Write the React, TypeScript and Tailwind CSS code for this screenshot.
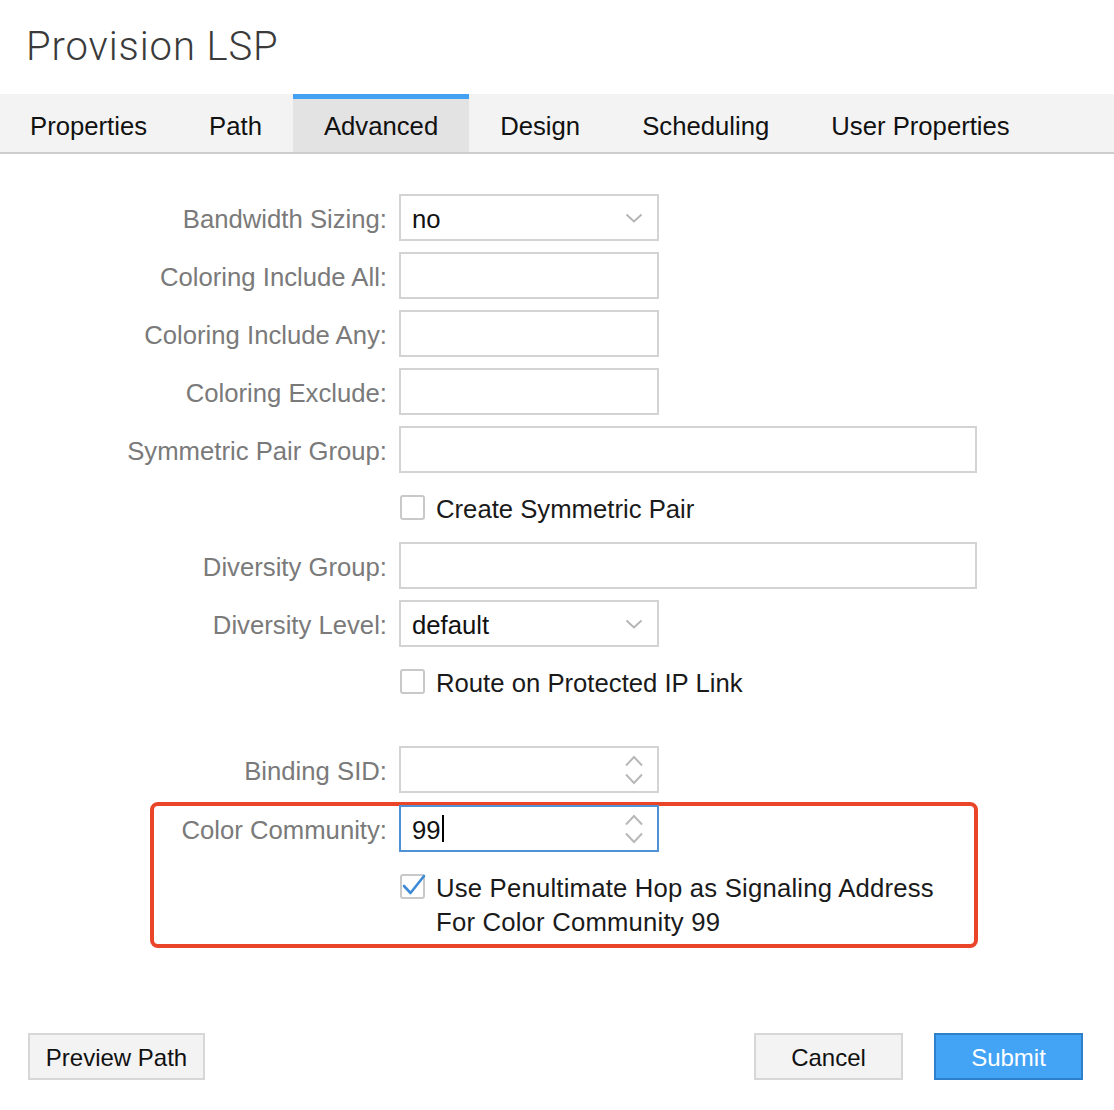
import React from "react";

const Chevron = () => (
  <svg width="18" height="10" viewBox="0 0 18 10" className="absolute right-[14px] top-1/2 -translate-y-1/2">
    <polyline points="1.5,1.5 9,8.5 16.5,1.5" fill="none" stroke="#b3b3b3" strokeWidth="1.8" />
  </svg>
);

const Spinner = () => (
  <svg width="20" height="30" viewBox="0 0 20 30" className="absolute right-[13px] top-1/2 -translate-y-1/2">
    <polyline points="2,10.5 10,2 18,10.5" fill="none" stroke="#b8b8b8" strokeWidth="2" />
    <polyline points="2,19.5 10,28 18,19.5" fill="none" stroke="#b8b8b8" strokeWidth="2" />
  </svg>
);

const Label = ({ children }: { children?: React.ReactNode }) => (
  <div className="w-[387px] text-right text-[#7a7a7a] pt-[3px] shrink-0">{children}</div>
);

const Row = ({ label, children, cls = "mb-[11px]" }: { label?: string; children: React.ReactNode; cls?: string }) => (
  <div className={"flex items-center h-[47px] " + cls}>
    <Label>{label}</Label>
    <div className="ml-[12px]">{children}</div>
  </div>
);

const Box = ({ wide, children, focus }: { wide?: boolean; children?: React.ReactNode; focus?: boolean }) => (
  <div
    className={
      "relative h-[47px] border-2 bg-white flex items-center pl-[11px] pt-[3px] text-[#111] " +
      (wide ? "w-[578px] " : "w-[260px] ") +
      (focus ? "border-[#4f91d4]" : "border-[#d3d3d3]")
    }
  >
    {children}
  </div>
);

const CheckBox = ({ checked }: { checked?: boolean }) => (
  <div className="relative w-[25px] h-[25px] border-2 border-[#c9c9c9] rounded-[3px] bg-white shrink-0">
    {checked && (
      <svg width="26" height="26" viewBox="0 0 26 26" className="absolute left-[-1px] top-[-3px]">
        <polyline points="3,13 9.5,20 23,3" fill="none" stroke="#3f8ad6" strokeWidth="2.6" strokeLinecap="round" strokeLinejoin="round" />
      </svg>
    )}
  </div>
);

const CheckRow = ({ text }: { text: string }) => (
  <div className="flex items-center gap-[11px] pl-[1px] text-[#1a1a1a]">
    <CheckBox />
    <span className="pt-[3px]">{text}</span>
  </div>
);

export default function App() {
  const tabs = ["Properties", "Path", "Advanced", "Design", "Scheduling", "User Properties"];
  return (
    <div className="w-[1114px] h-[1110px] bg-white text-[25.7px] font-['Liberation_Sans',Arial,sans-serif] overflow-hidden">
      <div className="h-[94px] pl-[26px] flex items-center">
        <div className="text-[40px] font-light text-[#3a3a3a] font-['Roboto',sans-serif] tracking-[0.9px] pt-[0px]">Provision LSP</div>
      </div>
      <div className="flex h-[60px] bg-[#f3f3f3] border-b-2 border-[#cdcdcd]">
        {tabs.map((t, i) => (
          <div
            key={t}
            className={
              "h-full flex items-center px-[31px] text-[#111] " +
              (i === 0 ? "pl-[30px] " : "") +
              (t === "Advanced" ? "bg-[#e3e3e3] border-t-[5px] border-[#42a1f0] pt-[1px]" : "pt-[6px]")
            }
          >
            {t}
          </div>
        ))}
      </div>
      <div className="h-[879px] pt-[40px]">
        <Row label="Bandwidth Sizing:">
          <Box>
            no
            <Chevron />
          </Box>
        </Row>
        <Row label="Coloring Include All:">
          <Box />
        </Row>
        <Row label="Coloring Include Any:">
          <Box />
        </Row>
        <Row label="Coloring Exclude:">
          <Box />
        </Row>
        <Row label="Symmetric Pair Group:">
          <Box wide />
        </Row>
        <Row>
          <CheckRow text="Create Symmetric Pair" />
        </Row>
        <Row label="Diversity Group:">
          <Box wide />
        </Row>
        <Row label="Diversity Level:">
          <Box>
            default
            <Chevron />
          </Box>
        </Row>
        <Row cls="mb-[41px]">
          <CheckRow text="Route on Protected IP Link" />
        </Row>
        <Row label="Binding SID:" cls="mb-[12px]">
          <Box>
            <Spinner />
          </Box>
        </Row>
        <div className="relative">
          <div className="absolute left-[150px] top-[-3px] w-[828px] h-[146px] border-[4px] border-[#ea4429] rounded-[8px] pointer-events-none" />
          <Row label="Color Community:" cls="mb-0">
            <Box focus>
              <span>99</span>
              <span className="inline-block w-[2px] h-[27px] bg-black ml-[1px] mb-[3px]" />
              <Spinner />
            </Box>
          </Row>
          <div className="flex mt-[19px]">
            <div className="w-[387px] shrink-0" />
            <div className="ml-[12px] flex gap-[11px] pl-[1px] text-[#1a1a1a] leading-[34px]">
              <div className="pt-[3px]">
                <CheckBox checked />
              </div>
              <div className="tracking-[0.2px]">
                <div>Use Penultimate Hop as Signaling Address</div>
                <div>For Color Community 99</div>
              </div>
            </div>
          </div>
        </div>
      </div>
      <div className="flex justify-between pl-[28px] pr-[31px]">
        <button className="h-[47px] w-[177px] bg-[#f3f3f3] border-2 border-[#d7d7d7] text-[24px] text-[#111] pt-[2px]">Preview Path</button>
        <div className="flex gap-[31px]">
          <button className="h-[47px] w-[149px] bg-[#f3f3f3] border-2 border-[#d7d7d7] text-[24px] text-[#111] pt-[2px]">Cancel</button>
          <button className="h-[47px] w-[149px] bg-[#43a4f5] border-2 border-[#2f80cc] text-[24px] text-white pt-[2px]">Submit</button>
        </div>
      </div>
    </div>
  );
}
